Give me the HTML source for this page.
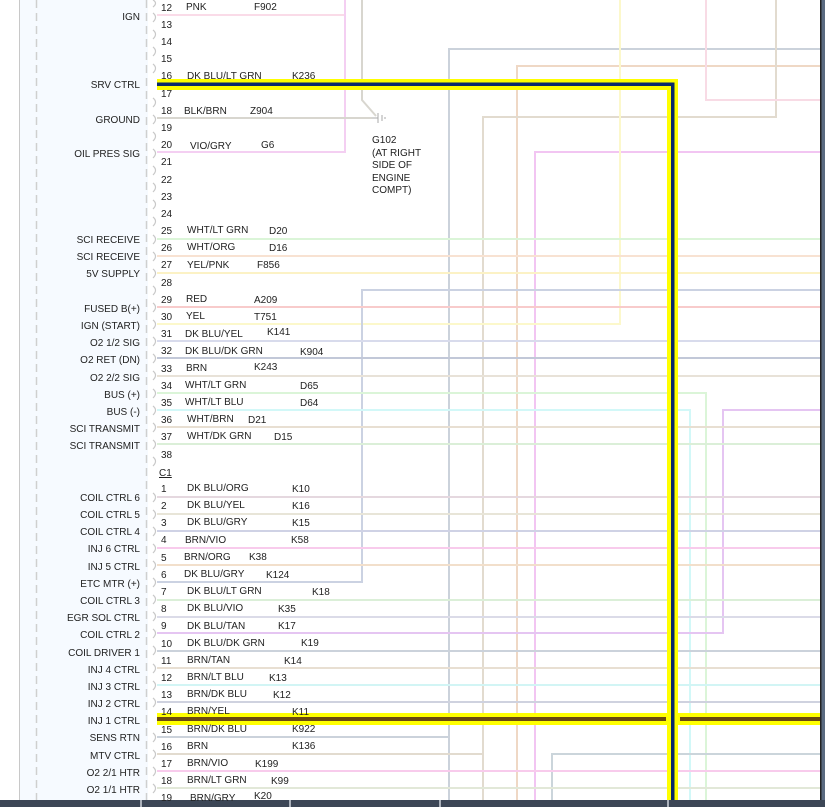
<!DOCTYPE html>
<html><head><meta charset="utf-8"><style>
html,body{margin:0;padding:0;background:#fff;width:825px;height:807px;overflow:hidden}
svg{display:block;font-family:"Liberation Sans",Arial,sans-serif;font-size:10px}
.l{text-anchor:end}
</style></head><body>
<svg width="825" height="807" viewBox="0 0 825 807">
<rect x="20" y="0" width="128" height="807" fill="#f6faff"/>
<line x1="19.5" y1="0" x2="19.5" y2="807" stroke="#c8c8c8"/>
<line x1="36.5" y1="0" x2="36.5" y2="807" stroke="#cfcfcf" stroke-width="1.5" stroke-dasharray="8,5"/>
<line x1="146.5" y1="0" x2="146.5" y2="807" stroke="#cfcfcf" stroke-width="1.5" stroke-dasharray="8,5"/>
<g fill="none" stroke-width="2" opacity="0.4">
<polyline points="157,15 345,15 345,0" stroke="#f3a6c8"/>
<polyline points="157,152 345,152 345,0" stroke="#e58ae0"/>
<polyline points="362,0 362,100 376,116" stroke="#a09a8a"/>
<line x1="157" y1="118" x2="372" y2="118" stroke="#a09a8a"/>
<polyline points="449,800 449,49 820,49" stroke="#8090a8"/>
<polyline points="517,800 517,66 820,66" stroke="#d8a070"/>
<polyline points="483,800 483,117 776,117 776,0" stroke="#b8a888"/>
<polyline points="535,800 535,152 820,152" stroke="#e070e0"/>
<polyline points="706,0 706,100 820,100" stroke="#f0a8c0"/>
<polyline points="157,324 620,324 620,0" stroke="#f8f080"/>
<polyline points="157,582 362,582 362,290 820,290" stroke="#8090b8"/>
<polyline points="157,393 706,393 706,800" stroke="#a8e8a0"/>
<polyline points="157,410 690,410 690,800" stroke="#90f0f0"/>
<polyline points="157,633 723,633 723,410 820,410" stroke="#c070e0"/>
<polyline points="157,737 449,737" stroke="#8090a8"/>
<polyline points="157,754 483,754" stroke="#b8a888"/>
<polyline points="552,807 552,754 820,754" stroke="#8098a8"/>
<line x1="157" y1="239" x2="820" y2="239" stroke="#a8e8a0"/>
<line x1="157" y1="256" x2="820" y2="256" stroke="#f0b890"/>
<line x1="157" y1="273" x2="820" y2="273" stroke="#f8e070"/>
<line x1="157" y1="307" x2="820" y2="307" stroke="#f08080"/>
<line x1="157" y1="341" x2="820" y2="341" stroke="#a0a8d0"/>
<line x1="157" y1="358" x2="820" y2="358" stroke="#6878a0"/>
<line x1="157" y1="376" x2="820" y2="376" stroke="#c8b8a0"/>
<line x1="157" y1="427" x2="820" y2="427" stroke="#c8b090"/>
<line x1="157" y1="444" x2="820" y2="444" stroke="#a8d8a0"/>
<line x1="157" y1="497" x2="820" y2="497" stroke="#c0a0b0"/>
<line x1="157" y1="514" x2="820" y2="514" stroke="#c8c0a0"/>
<line x1="157" y1="531" x2="820" y2="531" stroke="#8890c0"/>
<line x1="157" y1="548" x2="820" y2="548" stroke="#f080d0"/>
<line x1="157" y1="565" x2="820" y2="565" stroke="#e0b080"/>
<line x1="157" y1="600" x2="820" y2="600" stroke="#a8d8a0"/>
<line x1="157" y1="617" x2="820" y2="617" stroke="#a8a8c8"/>
<line x1="157" y1="651" x2="820" y2="651" stroke="#8090a8"/>
<line x1="157" y1="668" x2="820" y2="668" stroke="#c8b090"/>
<line x1="157" y1="685" x2="820" y2="685" stroke="#90e8e8"/>
<line x1="157" y1="702" x2="820" y2="702" stroke="#8890b0"/>
<line x1="157" y1="771" x2="820" y2="771" stroke="#f080d0"/>
<line x1="157" y1="788" x2="820" y2="788" stroke="#b8c8a0"/>
</g>
<g stroke="#aaa" stroke-width="1" fill="none"><line x1="378" y1="113" x2="378" y2="123"/><line x1="382" y1="115" x2="382" y2="121"/><line x1="385" y1="117" x2="385" y2="119"/><line x1="372" y1="118" x2="378" y2="118"/></g>
<rect x="157" y="713" width="663" height="12" fill="#ffff00"/>
<rect x="157" y="717" width="509" height="4" fill="#6a4a10"/>
<rect x="680" y="717" width="140" height="4" fill="#6a4a10"/>
<rect x="157" y="79" width="521" height="11" fill="#ffff00"/>
<rect x="667" y="79" width="11" height="721" fill="#ffff00"/>
<rect x="157" y="82.5" width="517" height="3.5" fill="#0a2a6a"/>
<rect x="671" y="82.5" width="3.5" height="718" fill="#0a2a6a"/>
<rect x="820" y="0" width="1.5" height="807" fill="#222"/>
<rect x="821.5" y="0" width="4" height="807" fill="#5a6a80"/>
<rect x="0" y="800" width="825" height="7" fill="#3c4656"/>
<g stroke="#cfd4dc" stroke-width="1.5"><line x1="141" y1="800" x2="141" y2="807"/><line x1="290" y1="800" x2="290" y2="807"/><line x1="440" y1="800" x2="440" y2="807"/><line x1="668" y1="800" x2="668" y2="807"/></g>
<g fill="none" stroke="#c8c8c8" stroke-width="1.2">
<path d="M153,0 q5,3 0,7 M153,13 q5,4 0,9 M153,30 q5,4 0,9 M153,47 q5,4 0,9 M153,64 q5,4 0,9 M153,98 q5,4 0,9 M153,115 q5,4 0,9 M153,132 q5,4 0,9 M153,149 q5,4 0,9 M153,166 q5,4 0,9 M153,183 q5,4 0,9 M153,200 q5,4 0,9 M153,217 q5,4 0,9 M153,235 q5,4 0,9 M153,252 q5,4 0,9 M153,269 q5,4 0,9 M153,286 q5,4 0,9 M153,303 q5,4 0,9 M153,320 q5,4 0,9 M153,337 q5,4 0,9 M153,354 q5,4 0,9 M153,371 q5,4 0,9 M153,389 q5,4 0,9 M153,406 q5,4 0,9 M153,423 q5,4 0,9 M153,440 q5,4 0,9 M153,457 q5,4 0,9"/>
<path d="M153,493 q5,4 0,9 M153,510 q5,4 0,9 M153,527 q5,4 0,9 M153,544 q5,4 0,9 M153,561 q5,4 0,9 M153,578 q5,4 0,9 M153,595 q5,4 0,9 M153,612 q5,4 0,9 M153,629 q5,4 0,9 M153,646 q5,4 0,9 M153,664 q5,4 0,9 M153,681 q5,4 0,9 M153,698 q5,4 0,9 M153,733 q5,4 0,9 M153,750 q5,4 0,9 M153,767 q5,4 0,9 M153,784 q5,4 0,9"/>
</g>
<g fill="#222">
<text class="l" x="140" y="0">IGN</text>
<text class="l" x="140" y="20">IGN</text>
<text class="l" x="140" y="88">SRV CTRL</text>
<text class="l" x="140" y="123">GROUND</text>
<text class="l" x="140" y="157">OIL PRES SIG</text>
<text class="l" x="140" y="243">SCI RECEIVE</text>
<text class="l" x="140" y="260">SCI RECEIVE</text>
<text class="l" x="140" y="277">5V SUPPLY</text>
<text class="l" x="140" y="312">FUSED B(+)</text>
<text class="l" x="140" y="329">IGN (START)</text>
<text class="l" x="140" y="346">O2 1/2 SIG</text>
<text class="l" x="140" y="363">O2 RET (DN)</text>
<text class="l" x="140" y="381">O2 2/2 SIG</text>
<text class="l" x="140" y="398">BUS (+)</text>
<text class="l" x="140" y="415">BUS (-)</text>
<text class="l" x="140" y="432">SCI TRANSMIT</text>
<text class="l" x="140" y="449">SCI TRANSMIT</text>
<text class="l" x="140" y="501">COIL CTRL 6</text>
<text class="l" x="140" y="518">COIL CTRL 5</text>
<text class="l" x="140" y="535">COIL CTRL 4</text>
<text class="l" x="140" y="552">INJ 6 CTRL</text>
<text class="l" x="140" y="570">INJ 5 CTRL</text>
<text class="l" x="140" y="587">ETC MTR (+)</text>
<text class="l" x="140" y="604">COIL CTRL 3</text>
<text class="l" x="140" y="621">EGR SOL CTRL</text>
<text class="l" x="140" y="638">COIL CTRL 2</text>
<text class="l" x="140" y="656">COIL DRIVER 1</text>
<text class="l" x="140" y="673">INJ 4 CTRL</text>
<text class="l" x="140" y="690">INJ 3 CTRL</text>
<text class="l" x="140" y="707">INJ 2 CTRL</text>
<text class="l" x="140" y="724">INJ 1 CTRL</text>
<text class="l" x="140" y="741">SENS RTN</text>
<text class="l" x="140" y="759">MTV CTRL</text>
<text class="l" x="140" y="776">O2 2/1 HTR</text>
<text class="l" x="140" y="793">O2 1/1 HTR</text>
</g>
<g fill="#222" font-size="10">
<text x="161" y="11">12</text><text x="186" y="10">PNK</text><text x="254" y="10">F902</text>
<text x="161" y="28">13</text><text x="161" y="45">14</text><text x="161" y="62">15</text>
<text x="161" y="79">16</text><text x="187" y="79">DK BLU/LT GRN</text><text x="292" y="79">K236</text>
<text x="161" y="97">17</text>
<text x="161" y="114">18</text><text x="184" y="114">BLK/BRN</text><text x="250" y="114">Z904</text>
<text x="161" y="131">19</text>
<text x="161" y="148">20</text><text x="190" y="149">VIO/GRY</text><text x="261" y="148">G6</text>
<text x="161" y="165">21</text><text x="161" y="183">22</text><text x="161" y="200">23</text><text x="161" y="217">24</text>
<text x="161" y="234">25</text><text x="187" y="233">WHT/LT GRN</text><text x="269" y="234">D20</text>
<text x="161" y="251">26</text><text x="187" y="250">WHT/ORG</text><text x="269" y="251">D16</text>
<text x="161" y="268">27</text><text x="187" y="268">YEL/PNK</text><text x="257" y="268">F856</text>
<text x="161" y="286">28</text>
<text x="161" y="303">29</text><text x="186" y="302">RED</text><text x="254" y="303">A209</text>
<text x="161" y="320">30</text><text x="186" y="319">YEL</text><text x="254" y="320">T751</text>
<text x="161" y="337">31</text><text x="185" y="337">DK BLU/YEL</text><text x="267" y="335">K141</text>
<text x="161" y="354">32</text><text x="185" y="354">DK BLU/DK GRN</text><text x="300" y="355">K904</text>
<text x="161" y="372">33</text><text x="186" y="371">BRN</text><text x="254" y="370">K243</text>
<text x="161" y="389">34</text><text x="185" y="388">WHT/LT GRN</text><text x="300" y="389">D65</text>
<text x="161" y="406">35</text><text x="185" y="405">WHT/LT BLU</text><text x="300" y="406">D64</text>
<text x="161" y="423">36</text><text x="187" y="422">WHT/BRN</text><text x="248" y="423">D21</text>
<text x="161" y="440">37</text><text x="187" y="439">WHT/DK GRN</text><text x="274" y="440">D15</text>
<text x="161" y="458">38</text>
<text x="159" y="476" text-decoration="underline">C1</text>
<text x="161" y="492">1</text><text x="187" y="491">DK BLU/ORG</text><text x="292" y="492">K10</text>
<text x="161" y="509">2</text><text x="187" y="508">DK BLU/YEL</text><text x="292" y="509">K16</text>
<text x="161" y="526">3</text><text x="187" y="525">DK BLU/GRY</text><text x="292" y="526">K15</text>
<text x="161" y="543">4</text><text x="185" y="543">BRN/VIO</text><text x="291" y="543">K58</text>
<text x="161" y="561">5</text><text x="184" y="560">BRN/ORG</text><text x="249" y="560">K38</text>
<text x="161" y="578">6</text><text x="184" y="577">DK BLU/GRY</text><text x="266" y="578">K124</text>
<text x="161" y="595">7</text><text x="187" y="594">DK BLU/LT GRN</text><text x="312" y="595">K18</text>
<text x="161" y="612">8</text><text x="187" y="611">DK BLU/VIO</text><text x="278" y="612">K35</text>
<text x="161" y="629">9</text><text x="187" y="629">DK BLU/TAN</text><text x="278" y="629">K17</text>
<text x="161" y="647">10</text><text x="187" y="646">DK BLU/DK GRN</text><text x="301" y="646">K19</text>
<text x="161" y="664">11</text><text x="187" y="663">BRN/TAN</text><text x="284" y="664">K14</text>
<text x="161" y="681">12</text><text x="187" y="680">BRN/LT BLU</text><text x="269" y="681">K13</text>
<text x="161" y="698">13</text><text x="187" y="697">BRN/DK BLU</text><text x="273" y="698">K12</text>
<text x="161" y="715">14</text><text x="187" y="714">BRN/YEL</text><text x="292" y="715">K11</text>
<text x="161" y="733">15</text><text x="187" y="732">BRN/DK BLU</text><text x="292" y="732">K922</text>
<text x="161" y="750">16</text><text x="187" y="749">BRN</text><text x="292" y="749">K136</text>
<text x="161" y="767">17</text><text x="187" y="766">BRN/VIO</text><text x="255" y="767">K199</text>
<text x="161" y="784">18</text><text x="187" y="783">BRN/LT GRN</text><text x="271" y="784">K99</text>
<text x="161" y="801">19</text><text x="190" y="801">BRN/GRY</text><text x="254" y="799">K20</text>
<text x="372" y="143">G102</text><text x="372" y="156">(AT RIGHT</text><text x="372" y="168">SIDE OF</text><text x="372" y="181">ENGINE</text><text x="372" y="193">COMPT)</text>
</g>
</svg>
</body></html>
